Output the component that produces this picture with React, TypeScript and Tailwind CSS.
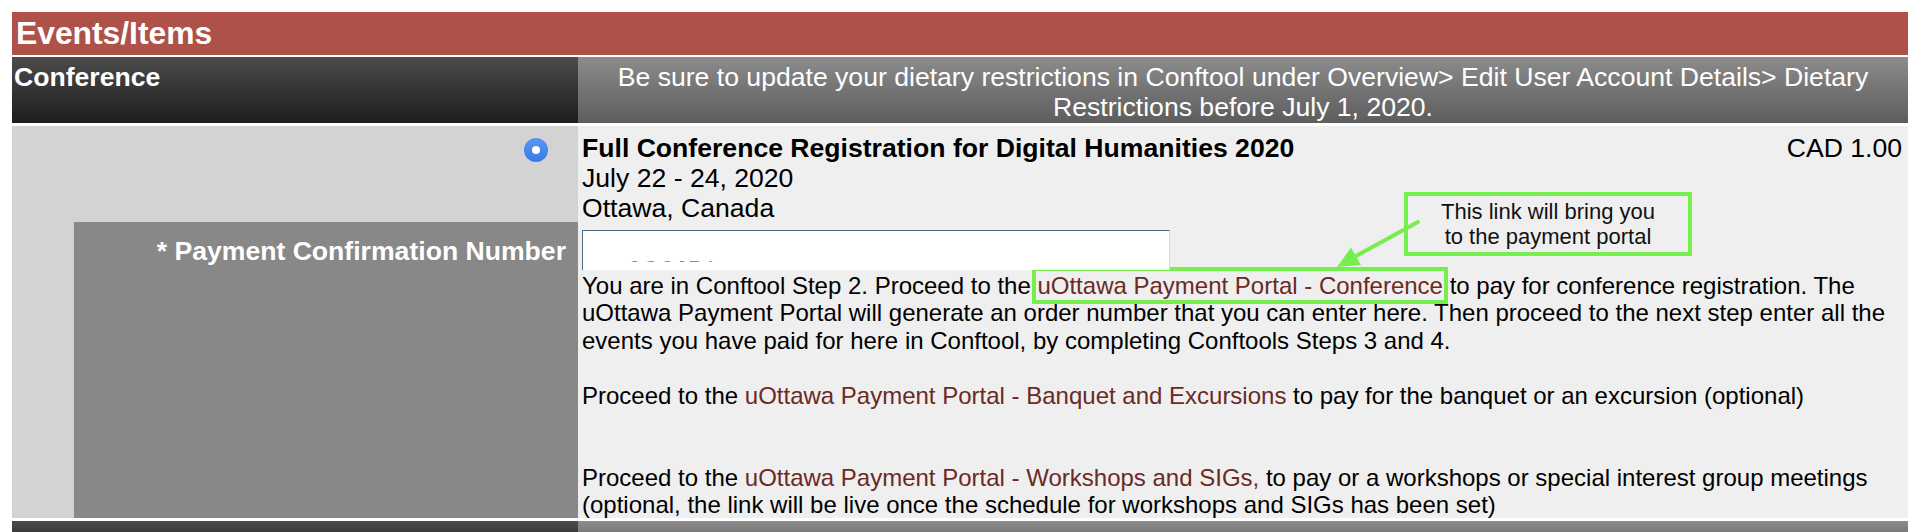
import React from "react";

const Link = ({ children }: { children: React.ReactNode }) => (
  <span className="text-[#6b2a24]">{children}</span>
);

export default function App() {
  return (
    <div
      className="w-[1918px] h-[532px] overflow-hidden bg-white pt-[12px] pl-[12px]"
      style={{ fontFamily: '"Liberation Sans", Arial, Helvetica, sans-serif' }}
    >
      <div className="w-[1896px] flex flex-col">
        {/* Title bar */}
        <div className="h-[43px] bg-[#ae5249] text-white font-bold text-[31.8px] leading-[36px] pl-[4px] pt-[3px]">
          Events/Items
        </div>

        {/* Header row */}
        <div className="mt-[2px] flex h-[66px]">
          <div className="w-[566px] bg-gradient-to-b from-[#4c4c4c] to-[#1e1e1e] text-white font-bold text-[26.6px] leading-[30px] pl-[2px] pt-[5px]">
            Conference
          </div>
          <div className="flex-1 bg-gradient-to-b from-[#8c8c8c] to-[#5d5d5d] text-white text-[26.6px] leading-[30px] text-center pt-[5px] px-[24px]">
            Be sure to update your dietary restrictions in Conftool under Overview&gt; Edit User Account Details&gt; Dietary Restrictions before July 1, 2020.
          </div>
        </div>

        {/* Body row */}
        <div className="mt-[3px] flex h-[392px]">
          <div className="w-[566px] bg-[#d3d3d3] flex flex-col">
            <div className="h-[96px] flex justify-end items-start pt-[12px] pr-[30px]">
              <div className="w-[24px] h-[24px] rounded-full bg-gradient-to-b from-[#5a95f5] to-[#3a78e6] flex items-center justify-center">
                <div className="w-[8px] h-[8px] rounded-full bg-white" />
              </div>
            </div>
            <div className="ml-[62px] flex-1 bg-[#888888] text-right text-white font-bold text-[26.6px] leading-[30px] pr-[12px] pt-[14px]">
              * Payment Confirmation Number
            </div>
          </div>

          <div className="relative flex-1 bg-[#efefef] pl-[4px] pr-[6px] pt-[7px] text-black">
            <div className="flex justify-between items-start text-[26.6px] leading-[30px]">
              <div>
                <div className="font-bold">Full Conference Registration for Digital Humanities 2020</div>
                <div>July 22 - 24, 2020</div>
                <div>Ottawa, Canada</div>
              </div>
              <div>CAD 1.00</div>
            </div>

            <div className="relative mt-[7px] w-[588px] h-[40px] bg-white border-t border-l border-[#4d6b88] border-r border-r-[#d8d8d8] overflow-hidden">
              <div className="absolute top-[27px] left-[46px] h-[4px] overflow-hidden">
                <span className="block text-[20px] leading-[20px] text-[#8a8a8a] tracking-[3px]">3O3J74</span>
              </div>
            </div>

            <div className="mt-[2px] text-[24px] leading-[27.4px]">
              You are in Conftool Step 2. Proceed to the{" "}
              <span className="text-[#6b2a24] outline-4 outline-[#76ee4e] outline-offset-[1px]">uOttawa Payment Portal - Conference</span>{" "}
              to pay for conference registration. The uOttawa Payment Portal will generate an order number that you can enter here. Then proceed to the next step enter all the events you have paid for here in Conftool, by completing Conftools Steps 3 and 4.
              <br />
              <br />
              Proceed to the <Link>uOttawa Payment Portal - Banquet and Excursions</Link> to pay for the banquet or an excursion (optional)
              <br />
              <br />
              <br />
              Proceed to the <Link>uOttawa Payment Portal - Workshops and SIGs,</Link> to pay or a workshops or special interest group meetings (optional, the link will be live once the schedule for workshops and SIGs has been set)
            </div>

            {/* Callout */}
            <div className="absolute left-[826px] top-[66px] w-[288px] h-[64px] border-4 border-[#76ee4e] flex items-center justify-center text-center text-[22px] leading-[25px] text-[#111]">
              This link will bring you
              <br />
              to the payment portal
            </div>

            {/* Arrow */}
            <svg className="absolute left-[740px] top-[90px]" width="120" height="60" viewBox="0 0 120 60">
              <line x1="100" y1="6" x2="38" y2="40" stroke="#76ee4e" strokeWidth="4" strokeLinecap="round" />
              <polygon points="19,51 33,31.6 43,49" fill="#76ee4e" />
            </svg>
          </div>
        </div>

        {/* Next row (cut off) */}
        <div className="mt-[3px] flex h-[30px]">
          <div className="w-[566px] bg-gradient-to-b from-[#4c4c4c] to-[#1e1e1e]" />
          <div className="flex-1 bg-gradient-to-b from-[#8c8c8c] to-[#5d5d5d]" />
        </div>
      </div>
    </div>
  );
}
